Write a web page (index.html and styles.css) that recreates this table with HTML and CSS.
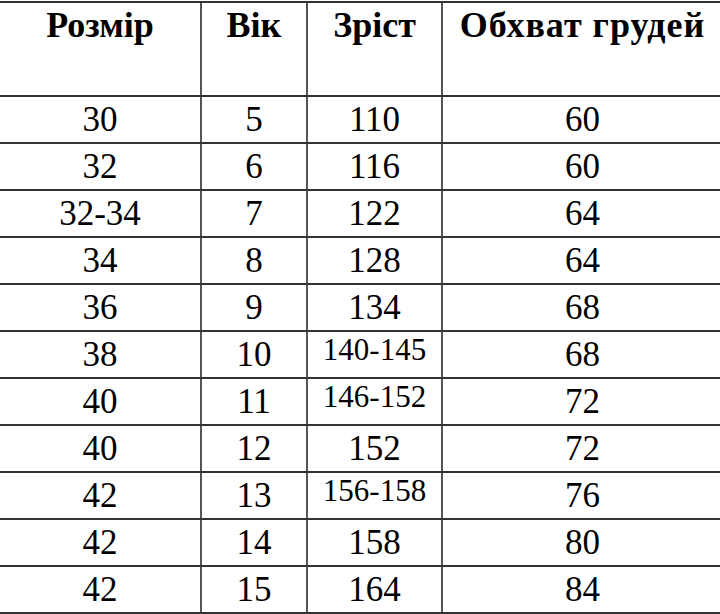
FILE: index.html
```html
<!DOCTYPE html>
<html lang="uk">
<head>
<meta charset="utf-8">
<title>Таблиця розмірів</title>
<link rel="stylesheet" href="styles.css">
</head>
<body>
<table class="sizes">
  <colgroup>
    <col class="c1"><col class="c2"><col class="c3"><col class="c4">
  </colgroup>
  <thead>
    <tr class="head">
      <th>Розмір</th><th>Вік</th><th>Зріст</th><th class="wide">Обхват грудей</th>
    </tr>
  </thead>
  <tbody>
    <tr><td>30</td><td>5</td><td>110</td><td>60</td></tr>
    <tr><td>32</td><td>6</td><td>116</td><td>60</td></tr>
    <tr><td>32-34</td><td>7</td><td>122</td><td>64</td></tr>
    <tr><td>34</td><td>8</td><td>128</td><td>64</td></tr>
    <tr><td>36</td><td>9</td><td>134</td><td>68</td></tr>
    <tr><td>38</td><td>10</td><td class="small">140-145</td><td>68</td></tr>
    <tr><td>40</td><td>11</td><td class="small">146-152</td><td>72</td></tr>
    <tr><td>40</td><td>12</td><td>152</td><td>72</td></tr>
    <tr><td>42</td><td>13</td><td class="small">156-158</td><td>76</td></tr>
    <tr><td>42</td><td>14</td><td>158</td><td>80</td></tr>
    <tr><td>42</td><td>15</td><td>164</td><td>84</td></tr>
  </tbody>
</table>
</body>
</html>
```

FILE: styles.css
```css
html, body {
  margin: 0;
  padding: 0;
  background: #fff;
}

body {
  overflow: hidden;
  font-family: "Liberation Serif", serif;
  color: #000;
}

.sizes {
  border-collapse: collapse;
  table-layout: fixed;
  width: 722px;
  margin-top: 1px;
}

.c1 { width: 201px; }
.c2 { width: 106px; }
.c3 { width: 135px; }
.c4 { width: 280px; }

.sizes th,
.sizes td {
  padding: 0;
  text-align: center;
  border-left: 2px solid #555;
  border-bottom: 2px solid #333;
  white-space: nowrap;
  font-family: "Liberation Serif", serif;
}

.sizes th:first-child,
.sizes td:first-child {
  border-left: none;
}

.head th {
  border-top: 2px solid #333;
  vertical-align: top;
  padding-top: 2px;
  font-size: 36px;
  font-weight: bold;
  line-height: 40px;
  box-sizing: border-box;
  height: 94px;
}

.head th.wide {
  letter-spacing: 1px;
}

.sizes td {
  height: 47px;
  box-sizing: border-box;
  vertical-align: middle;
  font-size: 35px;
  line-height: 40px;
}

.sizes td.small {
  font-size: 31px;
  line-height: 30px;
  padding-bottom: 10px;
}
```
